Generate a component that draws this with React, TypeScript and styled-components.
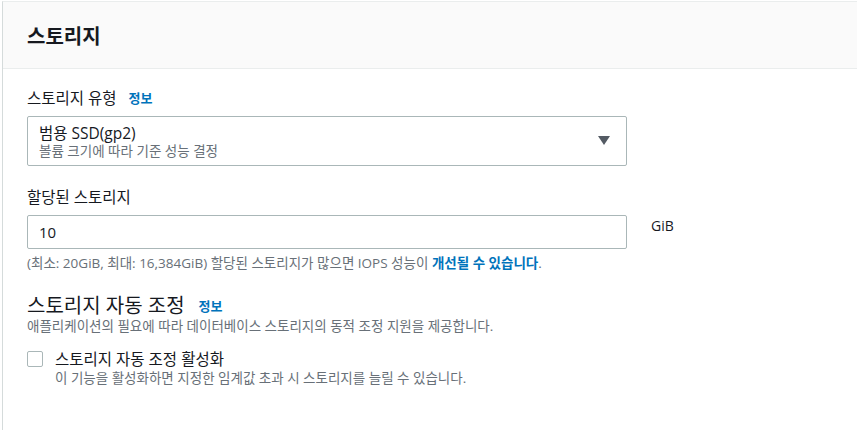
import React from "react";
import styled, { createGlobalStyle } from "styled-components";

const Global = createGlobalStyle`
  body {
    margin: 0;
    background: #fff;
    font-family: "Open Sans", "Noto Sans CJK KR", sans-serif;
    color: #16191f;
  }
`;

const Panel = styled.div`
  margin: 1px 0 0 2px;
  border-top: 1px solid #eaeded;
  border-left: 1px solid #d5dbdb;
  min-height: 429px;
  box-sizing: border-box;
`;

const Header = styled.div`
  background: #fafafa;
  border-bottom: 1px solid #eaeded;
  height: 66px;
  display: flex;
  align-items: center;
  padding-left: 24px;
`;

const Title = styled.h2`
  margin: 0;
  font-size: 20px;
  font-weight: 700;
`;

const Body = styled.div`
  padding: 18px 24px 0 24px;
  display: flex;
  flex-direction: column;
`;

const Label = styled.div`
  display: flex;
  align-items: center;
  gap: 12px;
  font-size: 15.5px;
  line-height: 22px;
`;

const Info = styled.a`
  color: #0073bb;
  font-size: 13px;
  font-weight: 700;
  text-decoration: none;
`;

const Row = styled.div`
  display: flex;
  align-items: flex-start;
  gap: 24px;
`;

const Select = styled.div`
  margin-top: 7px;
  width: 600px;
  height: 50px;
  box-sizing: border-box;
  border: 1px solid #aab7b8;
  border-radius: 2px;
  display: flex;
  align-items: center;
  justify-content: space-between;
  padding: 0 16px 0 11px;
`;

const Main = styled.div<{ $lh?: number }>`
  font-size: 15.5px;
  line-height: ${(p) => p.$lh ?? 20}px;
`;

const Sub = styled.div`
  font-size: 13.5px;
  line-height: 17px;
  color: #687078;
`;

const Field = styled.div<{ $top: number }>`
  margin-top: ${(p) => p.$top}px;
`;

const Input = styled.div`
  margin-top: 7px;
  width: 600px;
  height: 34px;
  box-sizing: border-box;
  border: 1px solid #aab7b8;
  border-radius: 2px;
  padding: 0 11px;
  font-size: 15px;
  display: flex;
  align-items: center;
`;

const Unit = styled.span`
  font-size: 14px;
  margin-top: 7px;
  line-height: 22px;
`;

const Hint = styled.div`
  margin-top: 6px;
  font-size: 13.5px;
  line-height: 17px;
  color: #687078;
  b {
    color: #0073bb;
  }
`;

const SectionTitle = styled.div`
  display: flex;
  align-items: center;
  gap: 14px;
  font-size: 20px;
  line-height: 24px;
`;

const Check = styled.div`
  margin-top: 13px;
  display: flex;
  gap: 12px;
`;

const Box = styled.span`
  margin-top: 3px;
  width: 14px;
  height: 14px;
  border: 1px solid #aab7b8;
  border-radius: 2px;
  flex-shrink: 0;
`;

const Arrow = () => (
  <svg width="12" height="10" viewBox="0 0 12 10">
    <path d="M0 0h12L6 9z" fill="#545b64" />
  </svg>
);

export default function App() {
  return (
    <>
      <Global />
      <Panel>
        <Header>
          <Title>스토리지</Title>
        </Header>
        <Body>
          <Label>
            스토리지 유형 <Info>정보</Info>
          </Label>
          <Select>
            <div>
              <Main>범용 SSD(gp2)</Main>
              <Sub>볼륨 크기에 따라 기준 성능 결정</Sub>
            </div>
            <Arrow />
          </Select>
          <Field $top={20}>
            <Label>할당된 스토리지</Label>
            <Row>
              <Input>10</Input>
              <Unit>GiB</Unit>
            </Row>
            <Hint>
              (최소: 20GiB, 최대: 16,384GiB) 할당된 스토리지가 많으면 IOPS 성능이 <b>개선될 수 있습니다</b>.
            </Hint>
          </Field>
          <Field $top={22}>
            <SectionTitle>
              스토리지 자동 조정 <Info>정보</Info>
            </SectionTitle>
            <Sub>애플리케이션의 필요에 따라 데이터베이스 스토리지의 동적 조정 지원을 제공합니다.</Sub>
            <Check>
              <Box />
              <div>
                <Main $lh={22}>스토리지 자동 조정 활성화</Main>
                <Sub>이 기능을 활성화하면 지정한 임계값 초과 시 스토리지를 늘릴 수 있습니다.</Sub>
              </div>
            </Check>
          </Field>
        </Body>
      </Panel>
    </>
  );
}
